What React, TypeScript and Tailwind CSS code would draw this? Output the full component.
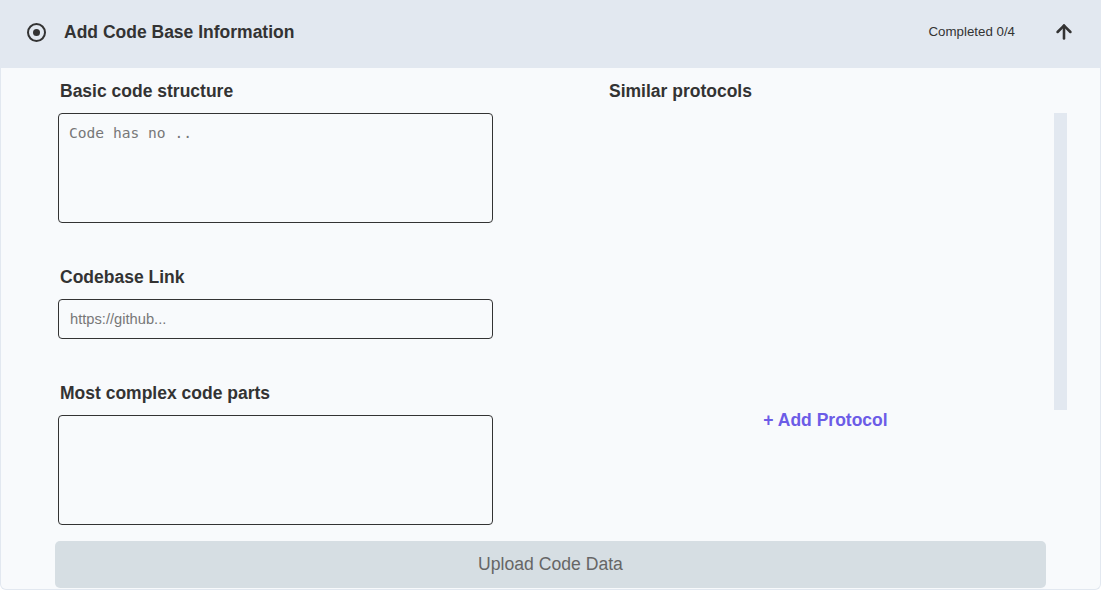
import { ArrowUp } from "lucide-react";

const labelCls = "text-[17.5px] font-bold leading-6 text-[#333] pl-[2px]";

const Field = ({ label, children, className = "" }: { label: string; children: React.ReactNode; className?: string }) => (
  <div className={`flex flex-col ${className}`}>
    <span className={labelCls}>{label}</span>
    <div className="mt-[10px]">{children}</div>
  </div>
);

export default function App() {
  return (
    <div
      className="h-[590px] w-[1101px] overflow-hidden"
      style={{ fontFamily: '"Liberation Sans", Arial, sans-serif' }}
    >
      <div className="flex h-[590px] flex-col rounded-b-md border-x border-b border-[#e2e8f0] bg-[#f8fafc]">
        {/* Header */}
        <div className="flex h-[68px] shrink-0 items-center bg-[#e2e8f0] pb-[4px] pl-[26px] pr-[25px]">
          <span className="flex h-[19px] w-[19px] items-center justify-center rounded-full border-2 border-[#333]">
            <span className="h-[7px] w-[7px] rounded-full bg-[#333]" />
          </span>
          <h1 className="ml-[18px] text-[17.5px] font-bold text-[#333]">Add Code Base Information</h1>
          <span className="ml-auto text-[13.3px] text-[#333]">Completed 0/4</span>
          <ArrowUp className="ml-[38px] h-[22px] w-[22px] text-[#333]" strokeWidth={2.8} />
        </div>

        {/* Body */}
        <div className="flex flex-1 pl-[57px] pt-[11px]">
          <div className="flex w-[435px] flex-col">
            <Field label="Basic code structure">
              <textarea
                placeholder="Code has no .."
                className="block h-[110px] w-full resize-none rounded-[4px] border border-[#333] bg-transparent px-[10px] pt-[8px] pb-[10px] font-['DejaVu_Sans_Mono',monospace] text-[14.6px] text-[#333] placeholder:text-[#777] focus:outline-none"
              />
            </Field>
            <Field label="Codebase Link" className="mt-[42px]">
              <input
                placeholder="https://github..."
                className="block h-[40px] w-full rounded-[4px] border border-[#333] bg-transparent px-[11px] text-[14.7px] text-[#333] placeholder:text-[#777] focus:outline-none"
              />
            </Field>
            <Field label="Most complex code parts" className="mt-[42px]">
              <textarea className="block h-[110px] w-full resize-none rounded-[4px] border border-[#333] bg-transparent p-[10px] text-[14px] focus:outline-none" />
            </Field>
          </div>

          <div className="ml-[114px] flex w-[460px] flex-col">
            <span className={`${labelCls} pl-[2px]`}>Similar protocols</span>
            <div className="mt-[10px] flex">
              <div className="flex-1" />
              <div className="h-[297px] w-[13px] bg-[#e2e8f0]" />
            </div>
            <button className="-mt-[2px] w-[437px] text-center text-[17.5px] font-bold leading-6 text-[#6c5ce7]">
              + Add Protocol
            </button>
          </div>
        </div>

        <div className="px-[54px] pb-[1px]">
          <button className="flex h-[47px] w-full items-center justify-center rounded-[5px] bg-[#d6dee3] text-[17.6px] text-[#666]">
            Upload Code Data
          </button>
        </div>
      </div>
    </div>
  );
}
